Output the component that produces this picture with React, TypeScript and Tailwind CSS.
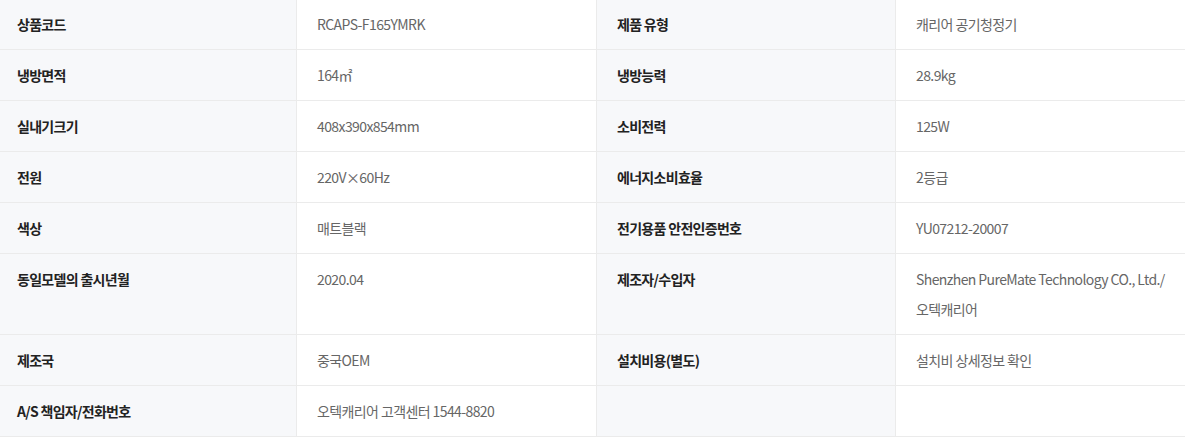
const rows: [string, string[], string, string[]][] = [
  ["상품코드", ["RCAPS-F165YMRK"], "제품 유형", ["캐리어 공기청정기"]],
  ["냉방면적", ["164㎡"], "냉방능력", ["28.9kg"]],
  ["실내기크기", ["408x390x854mm"], "소비전력", ["125W"]],
  ["전원", ["220V×60Hz"], "에너지소비효율", ["2등급"]],
  ["색상", ["매트블랙"], "전기용품 안전인증번호", ["YU07212-20007"]],
  [
    "동일모델의 출시년월",
    ["2020.04"],
    "제조자/수입자",
    ["Shenzhen PureMate Technology CO., Ltd./", "오텍캐리어"],
  ],
  ["제조국", ["중국OEM"], "설치비용(별도)", ["설치비 상세정보 확인"]],
  ["A/S 책임자/전화번호", ["오텍캐리어 고객센터 1544-8820"], "", []],
];

const font = { fontFamily: '"Noto Sans CJK KR", "Noto Sans", sans-serif' };

function Label({ text, first }: { text: string; first?: boolean }) {
  return (
    <div
      className={`bg-[#f7f8fa] border-b border-[#ebebeb] py-[10px] text-[14px] font-bold leading-[30px] tracking-[-0.7px] text-[#222] ${
        first ? "pl-[17px]" : "border-l pl-[20px]"
      }`}
    >
      {text}
    </div>
  );
}

function Value({ lines }: { lines: string[] }) {
  return (
    <div className="border-b border-l border-[#ebebeb] py-[10px] pl-[20px] text-[14px] leading-[30px] tracking-[-0.6px] text-[#666]">
      {lines.map((l, i) => (
        <div key={i}>{l}</div>
      ))}
      {lines.length === 0 && <div>&nbsp;</div>}
    </div>
  );
}

export default function App() {
  return (
    <div className="w-[1185px] bg-white -mt-[2px]" style={font}>
      <div className="grid grid-cols-[296px_300px_299px_1fr] border-t border-[#ebebeb]">
        {rows.map(([l1, v1, l2, v2], i) => (
          <div key={i} className="contents">
            <Label text={l1} first />
            <Value lines={v1} />
            <Label text={l2} />
            <Value lines={v2} />
          </div>
        ))}
      </div>
    </div>
  );
}
